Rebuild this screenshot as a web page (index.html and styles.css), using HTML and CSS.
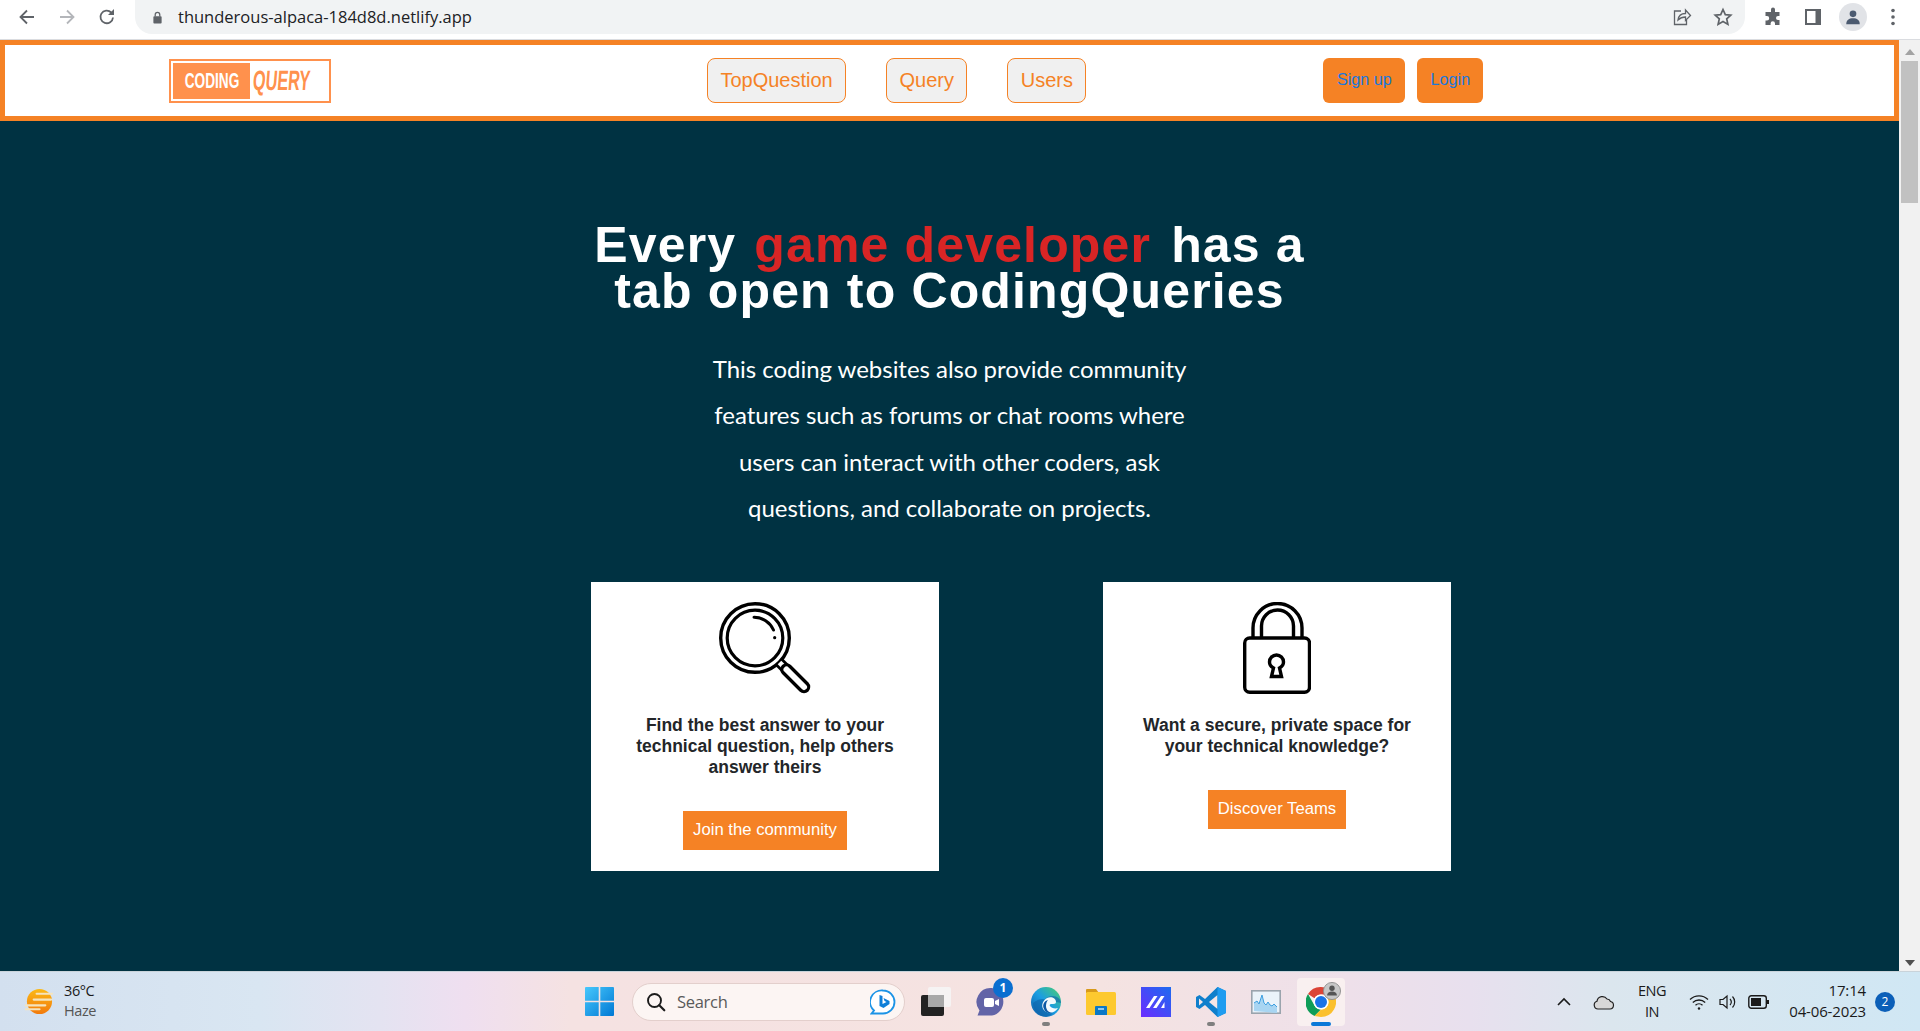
FILE: index.html
```html
<!DOCTYPE html>
<html lang="en">
<head>
<meta charset="utf-8">
<title>Coding Query</title>
<link rel="stylesheet" href="styles.css">
</head>
<body>
<div class="screen">
  <header class="toolbar">
    <div class="tb-nav">
      <svg class="tb-ico" viewBox="0 0 20 20"><path d="M17 10H4M10 3.500L3.500 10l6.500 6.500" fill="none" stroke="#5f6368" stroke-width="1.800"/></svg>
      <svg class="tb-ico" viewBox="0 0 20 20"><path d="M3 10h13M10 3.500l6.500 6.500-6.500 6.500" fill="none" stroke="#b4b6ba" stroke-width="1.800"/></svg>
      <svg class="tb-ico" viewBox="0 0 20 20"><path d="M16 10.500a6.300 6.300 0 1 1-1.800-5" fill="none" stroke="#5f6368" stroke-width="1.800"/><path d="M17 2v6h-6z" fill="#5f6368"/></svg>
    </div>
    <div class="omnibox">
      <svg class="lock-mini" viewBox="0 0 12 14"><path d="M3.500 6V4a2.500 2.500 0 0 1 5 0v2" fill="none" stroke="#5f6368" stroke-width="1.400"/><rect x="1.500" y="5.500" width="9" height="8" rx="1" fill="#5f6368"/></svg>
      <span class="url">thunderous-alpaca-184d8d.netlify.app</span>
      <div class="omni-actions">
        <svg class="tb-ico" viewBox="0 0 20 20"><path d="M9 4H2.500v13.500h12V13" fill="none" stroke="#5f6368" stroke-width="1.300"/><path d="M6 13c.5-4 3.500-6.500 7.500-6.500V3l5 5.500-5 5V10C10 10 8 11 6 13z" fill="none" stroke="#5f6368" stroke-width="1.300"/></svg>
        <svg class="tb-ico" viewBox="0 0 20 20"><path d="M10 2.500l2.300 5.100 5.500.6-4.100 3.700 1.200 5.500L10 14.600l-4.900 2.800 1.200-5.500-4.100-3.700 5.500-.6z" fill="none" stroke="#5f6368" stroke-width="1.700"/></svg>
      </div>
    </div>
    <div class="tb-ext">
      <svg class="tb-ico" viewBox="0 0 20 20"><path d="M8 2.500a2 2 0 0 1 4 0V5h4.500v4h-1.500a2 2 0 0 0 0 4h1.500v5H12v-1.500a2.200 2.200 0 0 0-4.400 0V18H2.500v-4.500H4a2.200 2.200 0 0 0 0-4.400H2.500V5H8z" fill="#5f6368"/></svg>
      <svg class="tb-ico" viewBox="0 0 20 20"><path d="M2 2h16v16H2z M4 4v12h8.500V4z" fill="#5f6368" fill-rule="evenodd"/></svg>
      <span class="tb-avatar"><svg viewBox="0 0 20 20"><circle cx="10" cy="6.500" r="3.700" fill="#4b5a70"/><path d="M2.500 18c0-4.500 3-6.500 7.500-6.500s7.500 2 7.500 6.500z" fill="#4b5a70"/></svg></span>
      <svg class="tb-ico" viewBox="0 0 20 20"><circle cx="10" cy="3.500" r="1.800" fill="#5f6368"/><circle cx="10" cy="10" r="1.800" fill="#5f6368"/><circle cx="10" cy="16.500" r="1.800" fill="#5f6368"/></svg>
    </div>
  </header>

  <div class="viewport">
    <main class="page">
      <nav class="site-nav">
        <a class="logo">
          <span class="logo-a"><span class="logo-a-text">CODING</span></span>
          <span class="logo-b">QUERY</span>
        </a>
        <div class="links">
          <a class="link">TopQuestion</a>
          <a class="link">Query</a>
          <a class="link">Users</a>
        </div>
        <div class="auth">
          <a class="auth-btn auth-signup">Sign up</a>
          <a class="auth-btn auth-login">Login</a>
        </div>
      </nav>

      <h1 class="headline">Every <span class="accent">game developer</span> has a<br>tab open to CodingQueries</h1>
      <p class="lead">This coding websites also provide community<br>features such as forums or chat rooms where<br>users can interact with other coders, ask<br>questions, and collaborate on projects.</p>

      <section class="cards">
        <article class="card">
          <svg class="card-ico glass" viewBox="0 0 92 92" fill="none" stroke="#000">
            <circle cx="36" cy="36" r="34.300" stroke-width="3.400"/>
            <circle cx="36" cy="36" r="27.800" stroke-width="3.200"/>
            <path d="M35 15.300A21 21 0 0 1 54.500 28" stroke-width="3" stroke-linecap="round"/>
            <circle cx="55.700" cy="35.700" r="1.600" fill="#000" stroke="none"/>
            <path d="M60 60l8 8" stroke-width="10.500"/>
            <path d="M60.500 60.500l8 8" stroke="#fff" stroke-width="5"/>
            <path d="M67.500 67.500L85 85" stroke-width="12.500" stroke-linecap="round"/>
            <path d="M67.500 67.500L85 85" stroke="#fff" stroke-width="6" stroke-linecap="round"/>
          </svg>
          <p class="card-text">Find the best answer to your technical question, help others answer theirs</p>
          <a class="card-btn">Join the community</a>
        </article>
        <article class="card">
          <svg class="card-ico padlock" viewBox="0 0 68 92" fill="none" stroke="#000" stroke-width="3.400">
            <path d="M10 36V26a24.500 24.500 0 0 1 49 0v10"/>
            <path d="M18.500 36V24a16 16 0 0 1 32 0v12"/>
            <rect x="1.700" y="36" width="64.800" height="54.300" rx="5"/>
            <path d="M28.500 74.500l2-8.500c-3-1.500-4-3.500-4-6a7 7 0 0 1 14 0c0 2.500-1 4.500-4 6l2 8.500z"/>
          </svg>
          <p class="card-text">Want a secure, private space for your technical knowledge?</p>
          <a class="card-btn">Discover Teams</a>
        </article>
      </section>
    </main>
    <aside class="scrollbar">
      <span class="arrow-up"></span>
      <span class="thumb"></span>
      <span class="arrow-down"></span>
    </aside>
  </div>

  <footer class="taskbar">
    <div class="weather">
      <svg class="sun" viewBox="0 0 30 30">
        <defs><linearGradient id="sung" x1="0" y1="0" x2="0" y2="1"><stop offset="0" stop-color="#fbb917"/><stop offset="1" stop-color="#f27a0c"/></linearGradient></defs>
        <circle cx="15" cy="15" r="13" fill="url(#sung)"/>
        <path d="M12 7h16M9 13h18M1 19h20M0 23h15" stroke="#f5e4bd" stroke-width="2.200" stroke-linecap="round"/>
      </svg>
      <div class="weather-text"><span class="temp">36°C</span><span class="cond">Haze</span></div>
    </div>
    <div class="apps">
      <svg class="winlogo" viewBox="0 0 29 29">
        <defs><linearGradient id="wing" x1="0" y1="0" x2="1" y2="1"><stop offset="0" stop-color="#47c8fc"/><stop offset="1" stop-color="#0078d4"/></linearGradient></defs>
        <path d="M1 0h12.700v13.700H0V1a1 1 0 0 1 1-1zM15.300 0H28a1 1 0 0 1 1 1v12.700H15.300zM0 15.300h13.700V29H1a1 1 0 0 1-1-1zM15.300 15.300H29V28a1 1 0 0 1-1 1H15.300z" fill="url(#wing)"/>
      </svg>
      <div class="search">
        <svg class="search-ico" viewBox="0 0 20 20"><circle cx="8.500" cy="8.500" r="6.500" fill="none" stroke="#1c1c1c" stroke-width="1.900"/><path d="M13.300 13.300l5 5" stroke="#1c1c1c" stroke-width="2.200" stroke-linecap="round"/></svg>
        <span class="search-label">Search</span>
        <svg class="bing" viewBox="0 0 26 26">
          <path d="M13 1.500a11.500 11.500 0 0 1 0 23H1.500l2.500-3A11.500 11.500 0 0 1 13 1.500z" fill="#fff" stroke="#1b93e6" stroke-width="1.800"/>
          <path d="M9.500 6l3 1v8l4-2-2-1-1-3 6 3v3l-6 4-4-2z" fill="#0f7fd8"/>
        </svg>
      </div>
      <div class="app-row">
        <span class="slot">
          <svg viewBox="0 0 30 30"><rect x="7" y="0" width="23" height="20" rx="2" fill="#f6f3f3"/><rect x="0" y="8" width="23" height="21" rx="2" fill="#222"/><rect x="7" y="8" width="16" height="12" fill="#a8a8a8"/></svg>
        </span>
        <span class="slot">
          <svg viewBox="0 0 30 30"><path d="M16 1a14 14 0 0 1 0 27.500H1.500l2-5A14 14 0 0 1 16 1z" fill="#6264a7"/><rect x="8" y="11" width="10" height="9" rx="2" fill="#fff"/><path d="M19 14l4-2v7l-4-2z" fill="#fff"/></svg>
          <span class="badge badge-teams">1</span>
        </span>
        <span class="slot">
          <svg viewBox="0 0 30 30">
            <defs><linearGradient id="edg" x1="0" y1="1" x2="1" y2="0"><stop offset="0" stop-color="#0c59a4"/><stop offset=".5" stop-color="#1b9de2"/><stop offset="1" stop-color="#4bd06c"/></linearGradient></defs>
            <circle cx="15" cy="15" r="15" fill="url(#edg)"/>
            <path d="M30 16c0-4-4-7-8.500-7C16 9 12 13 12 18c0 5 4 9 9 9-3 3-8 3-10 2-5-2-9-7-9-13 2-1 4-4 10-4" fill="#0f62a8" opacity=".6"/>
            <path d="M16 11c4-2 9 0 9 4 0 2-2 2-5 2-1 0-2 1-1 2 1 2 5 3 8 2-3 5-9 6-13 3-4-3-4-9 2-13z" fill="#fff" opacity=".95"/>
            <path d="M17 13c-4 1-6 5-4 9 1 3 5 5 9 4-5 0-7-4-7-7 0-3 1-5 2-6z" fill="#0c59a4"/>
          </svg>
          <span class="run-dot"></span>
        </span>
        <span class="slot">
          <svg viewBox="0 0 30 30"><path d="M0 3a1 1 0 0 1 1-1h9l3 4h-13z" fill="#d89a1a"/><rect x="0" y="5" width="30" height="23" rx="1.500" fill="#fdc92f"/><path d="M10 19h10a1 1 0 0 1 1 1v8H9v-8a1 1 0 0 1 1-1z" fill="#0b78c6"/><path d="M12 22h6" stroke="#bfe3fa" stroke-width="1.500"/></svg>
        </span>
        <span class="slot">
          <svg viewBox="0 0 30 30">
            <defs><linearGradient id="stg" x1="0" y1="1" x2="1" y2="0"><stop offset="0" stop-color="#6c2cff"/><stop offset="1" stop-color="#1c6bf0"/></linearGradient></defs>
            <rect width="30" height="30" fill="url(#stg)"/>
            <path d="M5 21l8-12h3.500l-8 12zM12 21l8-12h3.500l-8 12zM20 21l3.500-6v6z" fill="#fff"/>
          </svg>
        </span>
        <span class="slot">
          <svg viewBox="0 0 30 30"><path d="M21.500 0L30 4v22l-8.500 4L9 18l-5.500 4L0 20v-10l3.500-2L9 12z" fill="#0f7fcc"/><path d="M21.500 8L13 15l8.500 7z" fill="#f5e6e6"/><path d="M3 11.500L7 15l-4 3.500z" fill="#f5e6e6"/><path d="M21.500 0L30 4v22l-8.500 4z" fill="#1f9cf0"/></svg>
          <span class="run-dot"></span>
        </span>
        <span class="slot">
          <svg class="monitor" viewBox="0 0 30 24"><rect x=".8" y=".8" width="28.400" height="22.400" fill="#eaf3fa" stroke="#9aa4ad" stroke-width="1.600"/><path d="M3 21V13l3-2 2 3 3-9 2 8 2 2 2-3 2 3 2 1 2-2 3 3v6z" fill="#a8d5f2"/><path d="M3 13l3-2 2 3 3-9 2 8 2 2 2-3 2 3 2 1 2-2 3 3" fill="none" stroke="#3d9fe0" stroke-width="1"/></svg>
        </span>
        <span class="chrome-tile">
          <svg class="chrome" viewBox="0 0 30 30">
            <path d="M15 0a15 15 0 0 1 13 7.500H15a7.500 7.500 0 0 0-6.500 3.750L2 7A15 15 0 0 1 15 0z" fill="#db4437"/>
            <path d="M2 7l6.500 11.500A7.500 7.500 0 0 0 15 22.500L8.500 29A15 15 0 0 1 2 7z" fill="#0f9d58"/>
            <path d="M28 7.500A15 15 0 0 1 15 30l-6.500-1L15 22.500a7.500 7.500 0 0 0 6.500-11.250L20 7.500z" fill="#fbc02d"/>
            <circle cx="15" cy="15" r="7.500" fill="#fff"/><circle cx="15" cy="15" r="6" fill="#1a73e8"/>
          </svg>
          <span class="chrome-avatar"><svg viewBox="0 0 20 20"><circle cx="10" cy="10" r="9.500" fill="#c7c7c7" stroke="#8d8d8d"/><circle cx="10" cy="7" r="3" fill="#555"/><path d="M4.500 15c0-3 2.500-4.500 5.500-4.500s5.500 1.500 5.500 4.500z" fill="#555"/></svg></span>
          <span class="run-bar"></span>
        </span>
      </div>
    </div>
    <div class="tray">
      <svg class="tray-chevron" viewBox="0 0 16 10"><path d="M2 8l6-6 6 6" fill="none" stroke="#1a1a1a" stroke-width="1.600"/></svg>
      <svg class="tray-cloud" viewBox="0 0 22 16"><path d="M5 15a4 4 0 0 1-1-7.800A5.500 5.500 0 0 1 14 5a4 4 0 0 1 3.500 2.500A3.800 3.800 0 0 1 17 15z" fill="#d8d8d8" stroke="#222" stroke-width="1.200"/></svg>
      <div class="lang"><span>ENG</span><span>IN</span></div>
      <svg class="tray-wifi" viewBox="0 0 20 18" fill="none" stroke="#1a1a1a" stroke-width="1.300"><path d="M1 6.500a13 13 0 0 1 18 0M3.800 9.500a9 9 0 0 1 12.400 0M6.500 12.300a5 5 0 0 1 7 0"/><circle cx="10" cy="15.500" r="1.200" fill="#1a1a1a" stroke="none"/></svg>
      <svg class="tray-vol" viewBox="0 0 18 18" fill="none" stroke="#1a1a1a" stroke-width="1.200"><path d="M1 6.500h3L8 3v12l-4-3.500H1z"/><path d="M11 6a4.500 4.500 0 0 1 0 6M13.500 3.500a8 8 0 0 1 0 11"/></svg>
      <svg class="tray-bat" viewBox="0 0 22 14"><rect x=".8" y=".8" width="17.500" height="12.400" rx="2.500" fill="none" stroke="#1a1a1a" stroke-width="1.400"/><rect x="3" y="3" width="10" height="8" fill="#1a1a1a"/><rect x="19" y="5" width="2" height="4" fill="#1a1a1a"/></svg>
      <div class="clock"><span>17:14</span><span>04-06-2023</span></div>
      <span class="notif">2</span>
    </div>
  </footer>
</div>
</body>
</html>
```

FILE: styles.css
```css
* { box-sizing: border-box; }
html, body { margin: 0; padding: 0; }
body { font-family: "Liberation Sans", Arial, sans-serif; overflow: hidden; }
.screen { width: 1920px; height: 1031px; display: flex; flex-direction: column; overflow: hidden; }

/* browser chrome */
.toolbar { flex: 0 0 40px; height: 40px; display: flex; background: #fff; border-bottom: 1px solid #dadce0; padding-bottom: 5px; }
.tb-ico { width: 20px; height: 20px; display: block; flex: none; }
.tb-nav { width: 135px; display: flex; align-items: center; padding-left: 17px; gap: 20px; }
.omnibox { width: 1610px; height: 34px; background: #f1f3f4; border-bottom-left-radius: 17px; border-bottom-right-radius: 17px; display: flex; align-items: center; padding-left: 17px; }
.lock-mini { width: 11px; height: 13px; display: block; }
.url { margin-left: 15px; font: 16.500px/20px "Open Sans", "Noto Sans", sans-serif; color: #202124; }
.omni-actions { margin-left: auto; display: flex; gap: 21px; padding-right: 12px; }
.tb-ext { flex: 1; display: flex; align-items: center; padding-left: 18px; gap: 20px; height: 34px; }
.tb-avatar { width: 28px; height: 28px; margin: 0 -4px; background: #e1e3e7; border-radius: 50%; display: flex; align-items: center; justify-content: center; flex: none; }
.tb-avatar svg { width: 18px; height: 18px; }

.viewport { flex: 1; display: flex; min-height: 0; }
.page { flex: 1; background: #003242; min-width: 0; }
.scrollbar { flex: 0 0 21px; background: #f1f1f1; display: flex; flex-direction: column; align-items: center; padding: 9px 2px 5px; }
.arrow-up { width: 0; height: 0; border: 5px solid transparent; border-top: 0; border-bottom: 6px solid #a3a3a3; flex: none; }
.thumb { width: 17px; height: 142px; background: #c1c1c1; margin-top: 6px; flex: none; }
.arrow-down { width: 0; height: 0; border: 5px solid transparent; border-bottom: 0; border-top: 6px solid #505050; margin-top: auto; flex: none; }

/* site nav */
.site-nav { height: 81px; background: #fff; border: 5px solid #f58225; display: flex; align-items: center; padding-left: 164px; }
.logo { width: 162px; height: 44px; border: 2px solid #ff914d; display: flex; align-items: center; padding-left: 2px; flex: none; overflow: hidden; }
.logo-a { width: 77px; height: 36px; background: #ff914d; display: flex; align-items: center; justify-content: center; flex: none; }
.logo-a-text { display: inline-block; color: #fff; font: 700 22px/36px "Liberation Sans", sans-serif; transform: scaleX(.62); }
.logo-b { display: inline-block; margin-left: 3px; width: 62px; color: #ff914d; font: 700 28px/36px "Liberation Sans", sans-serif; white-space: nowrap; transform-origin: left center; transform: scaleX(.58) skewX(-8deg); }
.links { display: flex; gap: 40px; margin-left: 376px; }
.link { height: 45px; padding: 0 12.400px; display: flex; align-items: center; font-size: 20px; color: #f58225; background: #f0f0f0; border: 1px solid #f58225; border-radius: 8px; }
.auth { display: flex; gap: 12px; margin-left: 237px; }
.auth-btn { height: 45px; padding-bottom: 2px; display: flex; align-items: center; justify-content: center; font-size: 16.200px; color: #1a78dc; background: #f58225; border-radius: 6px; }
.auth-signup { width: 82px; }
.auth-login { width: 66px; }

/* hero */
.headline { margin: 101px 0 0; font-size: 50px; line-height: 46px; font-weight: 700; letter-spacing: 1.150px; color: #fff; text-align: center; }
.accent { color: #d92525; margin: 0 5px 0 3px; }
.lead { margin: 32px 0 0; font: 24px/46.400px Lato, "Noto Sans", sans-serif; letter-spacing: -.03px; color: #fff; text-align: center; }

/* cards */
.cards { display: flex; gap: 164px; margin-top: 50px; padding-left: 591px; }
.card { width: 348px; height: 289px; background: #fff; padding: 20px 30px 0; display: flex; flex-direction: column; align-items: center; }
.card-ico { display: block; height: 92px; flex: none; }
.glass { width: 92px; }
.padlock { width: 68px; }
.card-text { margin: 21px 0 0; font-size: 17.500px; line-height: 21px; font-weight: 700; color: #232629; text-align: center; }
.card-btn { margin-top: 33px; height: 39px; padding: 0 10px; display: flex; align-items: center; font-size: 16.700px; color: #fff; background: #f58225; }

/* taskbar */
.taskbar { flex: 0 0 60px; height: 60px; display: flex; align-items: center; border-top: 1px solid #c9d3da; background: linear-gradient(90deg, #d3e0ef 0, #d9e6f2 260px, #e4e3f1 380px, #efdff0 465px, #f5e2e2 570px, #f5e3e1 1100px, #eee0ea 1350px, #e8e0ee 1470px, #dbe6ee 1610px, #d0e7f4 1920px); }
.weather { width: 585px; flex: none; display: flex; align-items: center; padding-left: 25px; }
.sun { width: 29px; height: 29px; display: block; flex: none; }
.weather-text { margin-left: 10px; display: flex; flex-direction: column; font: 14.500px/20px "Open Sans", "Noto Sans", sans-serif; letter-spacing: -.4px; color: #1a1a1a; padding-bottom: 2px; }
.cond { color: #555; }
.apps { display: flex; align-items: center; flex: none; }
.winlogo { width: 29px; height: 29px; display: block; flex: none; }
.search { margin-left: 18px; width: 273px; height: 38px; border-radius: 19px; background: #fcf5f3; border: 1px solid #e3cfcc; display: flex; align-items: center; padding: 0 8px 0 13px; }
.search-ico { width: 20px; height: 20px; display: block; flex: none; }
.search-label { margin-left: 11px; font: 16.500px/20px "Open Sans", "Noto Sans", sans-serif; letter-spacing: -.3px; color: #5a5a5a; }
.bing { margin-left: auto; width: 26px; height: 26px; display: block; flex: none; }
.app-row { display: flex; align-items: center; gap: 25px; margin-left: 16px; }
.slot { position: relative; width: 30px; height: 30px; display: flex; align-items: center; justify-content: center; flex: none; }
.slot svg { width: 30px; height: 30px; display: block; }
.slot svg.monitor { height: 24px; }
.badge { position: absolute; top: -9px; right: -7px; width: 20px; height: 20px; border-radius: 50%; background: #0b6fd0; color: #fff; font: 700 12px/20px "Open Sans", sans-serif; text-align: center; }
.run-dot { position: absolute; left: 11px; bottom: -9px; width: 8px; height: 4px; border-radius: 2px; background: #7f7f7f; }
.chrome-tile { position: relative; width: 48px; height: 48px; margin-left: -9px; background: #f9f0f0; border-radius: 4px; display: flex; align-items: center; justify-content: center; flex: none; }
.chrome { width: 30px; height: 30px; display: block; }
.chrome-avatar { position: absolute; top: 4px; right: 4px; width: 18px; height: 18px; }
.chrome-avatar svg { width: 18px; height: 18px; display: block; }
.run-bar { position: absolute; bottom: 0; left: 14px; width: 20px; height: 4px; border-radius: 2px; background: #0b78d8; }

.tray { margin-left: auto; flex: none; display: flex; align-items: center; padding-right: 25px; }
.tray svg { display: block; flex: none; }
.tray-chevron { width: 16px; height: 10px; }
.tray-cloud { width: 22px; height: 16px; margin-left: 21px; }
.lang { width: 30px; margin-left: 22px; padding-bottom: 2px; display: flex; flex-direction: column; align-items: center; font: 14.500px/21px "Open Sans", "Noto Sans", sans-serif; letter-spacing: -.5px; color: #1a1a1a; }
.tray-wifi { width: 20px; height: 18px; margin-left: 22px; }
.tray-vol { width: 18px; height: 18px; margin-left: 10px; }
.tray-bat { width: 22px; height: 14px; margin-left: 11px; }
.clock { margin-left: 10px; width: 86px; padding-bottom: 2px; display: flex; flex-direction: column; align-items: flex-end; font: 15px/21px "Open Sans", "Noto Sans", sans-serif; letter-spacing: -.15px; color: #1a1a1a; }
.notif { margin-left: 9px; width: 20px; height: 20px; border-radius: 50%; background: #0b5fb8; color: #fff; font: 12px/20px "Open Sans", sans-serif; text-align: center; flex: none; }
```
